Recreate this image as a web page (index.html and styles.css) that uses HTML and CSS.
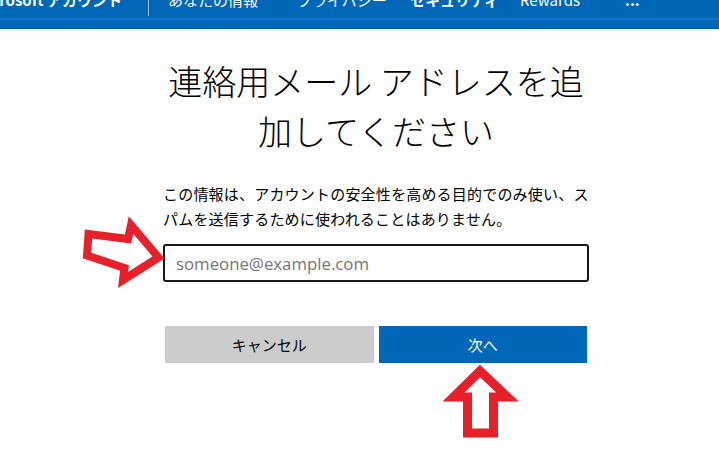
FILE: index.html
```html
<!DOCTYPE html>
<html lang="ja">
<head>
    <meta charset="UTF-8">
    <meta name="viewport" content="width=device-width, initial-scale=1.0">
    <title>連絡用メール アドレスを追加してください</title>
    <link rel="stylesheet" href="styles.css">
</head>
<body>
    <header class="cabecera">
        <nav class="menu">
            <span class="marca">Microsoft アカウント</span>
            <span class="separador"></span>
            <a class="item item-info">あなたの情報</a>
            <a class="item item-priv">プライバシー</a>
            <a class="item item-seg">セキュリティ</a>
            <a class="item item-rew">Rewards</a>
            <a class="item item-mas">...</a>
        </nav>
        <div class="franja"></div>
    </header>

    <div class="pagina">
        <div class="contenido">
            <h1 class="titulo">連絡用メール アドレスを追加してください</h1>
            <p class="texto">この情報は、アカウントの安全性を高める目的でのみ使い、スパムを送信するために使われることはありません。</p>
            <input type="email" class="correo" placeholder="someone@example.com">
            <div class="botones">
                <button type="button" class="btn btn-cancelar">キャンセル</button>
                <button type="button" class="btn btn-siguiente">次へ</button>
            </div>
        </div>

        <!-- flechas rojas de anotacion -->
        <svg class="flecha flecha-derecha" width="90" height="78" viewBox="0 0 90 78">
            <polygon points="10.5,20 50,25 53,11 80.5,43.5 45,66 46.5,54 9,41.5" fill="#fff" stroke="#e8202a" stroke-width="8" stroke-linejoin="miter"/>
        </svg>
        <svg class="flecha flecha-arriba" width="82" height="84" viewBox="0 0 82 84">
            <polygon points="40,11 13.5,37 27.5,37 27.5,73 53.5,73 53.5,37 67.5,37" fill="#fff" stroke="#e8202a" stroke-width="9" stroke-linejoin="miter"/>
        </svg>
    </div>
</body>
</html>
```

FILE: styles.css
```css
body {
    margin: 0;
    background: #fff;
    font-family: "Noto Sans CJK JP", "Noto Sans", sans-serif;
    color: #000;
}

.cabecera {
    height: 29px;
    background-color: #0067b8;
    overflow: hidden;
    position: relative;
}

.menu {
    display: flex;
    align-items: flex-start;
    margin-top: -10px;
    white-space: nowrap;
    color: #fff;
    font-size: 15px;
    line-height: 20px;
}

.marca {
    margin-left: -26px;
    font-weight: bold;
    width: 174px;
    flex-shrink: 0;
}

.separador {
    width: 1px;
    height: 26px;
    background: #9cc3e8;
    flex-shrink: 0;
}

.item {
    flex-shrink: 0;
}

.item-info {
    margin-left: 19px;
    width: 129px;
}

.item-priv {
    width: 113px;
}

.item-seg {
    width: 110px;
    font-weight: bold;
}

.item-rew {
    width: 105px;
}

.item-mas {
    font-weight: bold;
}

.franja {
    position: absolute;
    left: 0;
    right: 0;
    top: 18px;
    height: 2px;
    background: #1273c4;
}

.pagina {
    position: relative;
    padding-top: 27px;
    min-height: 405px;
}

.contenido {
    width: 426px;
    margin-left: 163px;
}

.titulo {
    margin: 0;
    text-align: center;
    font-size: 34px;
    font-weight: 300;
    line-height: 50px;
}

.texto {
    margin: 25px 0 0;
    font-size: 15px;
    letter-spacing: 0.2px;
    line-height: 25px;
}

.correo {
    display: block;
    box-sizing: border-box;
    width: 426px;
    height: 38px;
    margin-top: 13px;
    padding: 0 11px;
    border: 2px solid #1a1a1a;
    border-radius: 3px;
    font-family: "Open Sans", sans-serif;
    font-size: 16.8px;
    outline: none;
}

.correo::placeholder {
    color: #767676;
}

.botones {
    display: flex;
    gap: 5px;
    margin: 44px 2px 0;
}

.btn {
    flex: 1;
    height: 37px;
    border: none;
    font-family: "Noto Sans CJK JP", sans-serif;
    font-size: 15px;
    cursor: pointer;
}

.btn-cancelar {
    background-color: #cccccc;
    color: #000;
}

.btn-siguiente {
    background-color: #0067b8;
    color: #fff;
}

.flecha {
    position: absolute;
}

.flecha-derecha {
    left: 78px;
    top: 185px;
}

.flecha-arriba {
    left: 440px;
    top: 331px;
}
```
